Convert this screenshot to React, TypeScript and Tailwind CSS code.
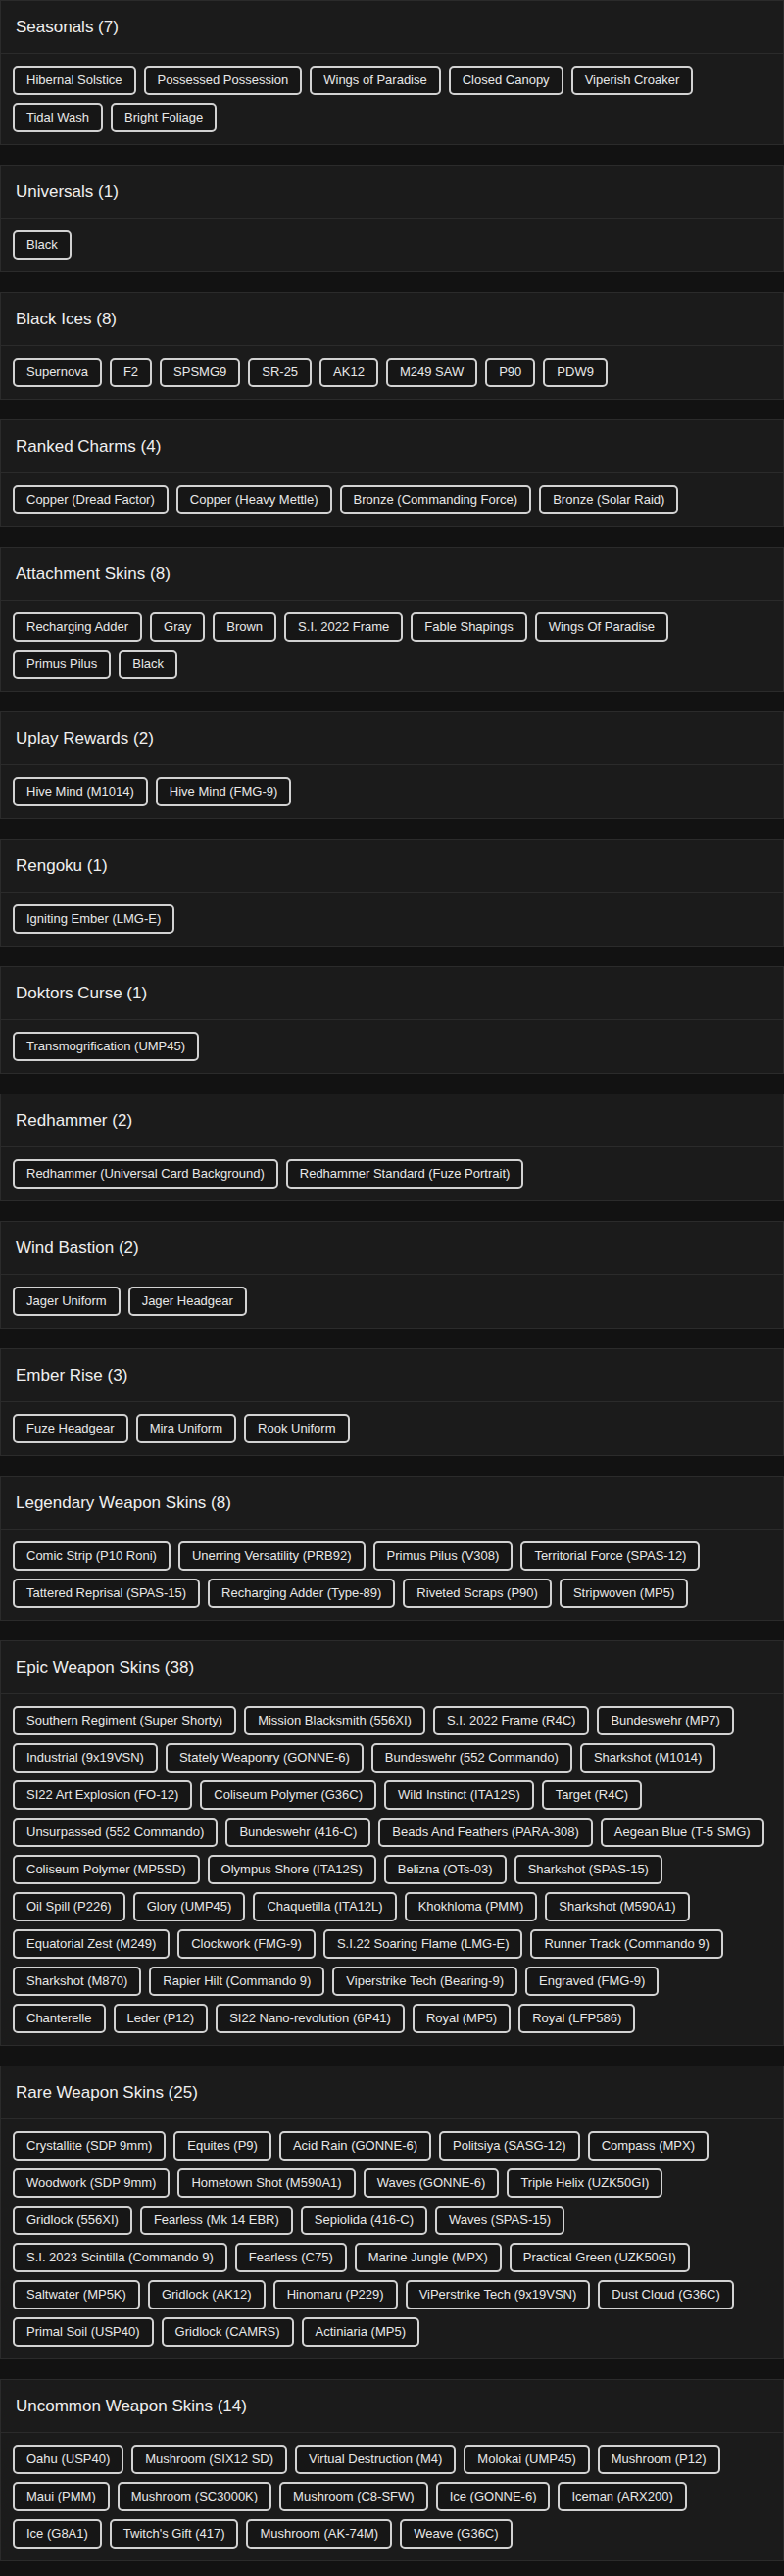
import { FC } from "react";

type Section = {
  title: string;
  rows: string[][];
};

// rows are kept as they wrap in the design
const SECTIONS: Section[] = [
  {
    title: "Seasonals",
    rows: [
      ["Hibernal Solstice", "Possessed Possession", "Wings of Paradise", "Closed Canopy", "Viperish Croaker"],
      ["Tidal Wash", "Bright Foliage"],
    ],
  },
  { title: "Universals", rows: [["Black"]] },
  {
    title: "Black Ices",
    rows: [["Supernova", "F2", "SPSMG9", "SR-25", "AK12", "M249 SAW", "P90", "PDW9"]],
  },
  {
    title: "Ranked Charms",
    rows: [
      ["Copper (Dread Factor)", "Copper (Heavy Mettle)", "Bronze (Commanding Force)", "Bronze (Solar Raid)"],
    ],
  },
  {
    title: "Attachment Skins",
    rows: [
      ["Recharging Adder", "Gray", "Brown", "S.I. 2022 Frame", "Fable Shapings", "Wings Of Paradise"],
      ["Primus Pilus", "Black"],
    ],
  },
  { title: "Uplay Rewards", rows: [["Hive Mind (M1014)", "Hive Mind (FMG-9)"]] },
  { title: "Rengoku", rows: [["Igniting Ember (LMG-E)"]] },
  { title: "Doktors Curse", rows: [["Transmogrification (UMP45)"]] },
  {
    title: "Redhammer",
    rows: [["Redhammer (Universal Card Background)", "Redhammer Standard (Fuze Portrait)"]],
  },
  { title: "Wind Bastion", rows: [["Jager Uniform", "Jager Headgear"]] },
  { title: "Ember Rise", rows: [["Fuze Headgear", "Mira Uniform", "Rook Uniform"]] },
  {
    title: "Legendary Weapon Skins",
    rows: [
      ["Comic Strip (P10 Roni)", "Unerring Versatility (PRB92)", "Primus Pilus (V308)", "Territorial Force (SPAS-12)"],
      ["Tattered Reprisal (SPAS-15)", "Recharging Adder (Type-89)", "Riveted Scraps (P90)", "Stripwoven (MP5)"],
    ],
  },
  {
    title: "Epic Weapon Skins",
    rows: [
      ["Southern Regiment (Super Shorty)", "Mission Blacksmith (556XI)", "S.I. 2022 Frame (R4C)", "Bundeswehr (MP7)"],
      ["Industrial (9x19VSN)", "Stately Weaponry (GONNE-6)", "Bundeswehr (552 Commando)", "Sharkshot (M1014)"],
      ["SI22 Art Explosion (FO-12)", "Coliseum Polymer (G36C)", "Wild Instinct (ITA12S)", "Target (R4C)"],
      ["Unsurpassed (552 Commando)", "Bundeswehr (416-C)", "Beads And Feathers (PARA-308)", "Aegean Blue (T-5 SMG)"],
      ["Coliseum Polymer (MP5SD)", "Olympus Shore (ITA12S)", "Belizna (OTs-03)", "Sharkshot (SPAS-15)"],
      ["Oil Spill (P226)", "Glory (UMP45)", "Chaquetilla (ITA12L)", "Khokhloma (PMM)", "Sharkshot (M590A1)"],
      ["Equatorial Zest (M249)", "Clockwork (FMG-9)", "S.I.22 Soaring Flame (LMG-E)", "Runner Track (Commando 9)"],
      ["Sharkshot (M870)", "Rapier Hilt (Commando 9)", "Viperstrike Tech (Bearing-9)", "Engraved (FMG-9)"],
      ["Chanterelle", "Leder (P12)", "SI22 Nano-revolution (6P41)", "Royal (MP5)", "Royal (LFP586)"],
    ],
  },
  {
    title: "Rare Weapon Skins",
    rows: [
      ["Crystallite (SDP 9mm)", "Equites (P9)", "Acid Rain (GONNE-6)", "Politsiya (SASG-12)", "Compass (MPX)"],
      ["Woodwork (SDP 9mm)", "Hometown Shot (M590A1)", "Waves (GONNE-6)", "Triple Helix (UZK50GI)"],
      ["Gridlock (556XI)", "Fearless (Mk 14 EBR)", "Sepiolida (416-C)", "Waves (SPAS-15)"],
      ["S.I. 2023 Scintilla (Commando 9)", "Fearless (C75)", "Marine Jungle (MPX)", "Practical Green (UZK50GI)"],
      ["Saltwater (MP5K)", "Gridlock (AK12)", "Hinomaru (P229)", "ViPerstrike Tech (9x19VSN)", "Dust Cloud (G36C)"],
      ["Primal Soil (USP40)", "Gridlock (CAMRS)", "Actiniaria (MP5)"],
    ],
  },
  {
    title: "Uncommon Weapon Skins",
    rows: [
      ["Oahu (USP40)", "Mushroom (SIX12 SD)", "Virtual Destruction (M4)", "Molokai (UMP45)", "Mushroom (P12)"],
      ["Maui (PMM)", "Mushroom (SC3000K)", "Mushroom (C8-SFW)", "Ice (GONNE-6)", "Iceman (ARX200)"],
      ["Ice (G8A1)", "Twitch's Gift (417)", "Mushroom (AK-74M)", "Weave (G36C)"],
    ],
  },
];

const Tag: FC<{ label: string }> = ({ label }) => (
  <span className="rounded-[5px] border-2 border-[#d2d2d2] bg-[#161616] px-3 py-1 text-[13px] leading-[18px] text-[#e8e8e8] whitespace-nowrap">
    {label}
  </span>
);

const SectionCard: FC<{ section: Section }> = ({ section }) => {
  const count = section.rows.reduce((n, row) => n + row.length, 0);
  return (
    <div className="border border-[#2b2b2b] bg-[#1b1b1b]">
      <div className="flex h-[54px] items-center border-b border-[#2b2b2b] px-[15px]">
        <h2 className="text-[17px] font-normal text-[#efefef]">
          {section.title} ({count})
        </h2>
      </div>
      <div className="flex flex-col gap-2 p-3">
        {section.rows.map((row, i) => (
          <div key={i} className="flex gap-2">
            {row.map((item, j) => (
              <Tag key={j} label={item} />
            ))}
          </div>
        ))}
      </div>
    </div>
  );
};

export default function App() {
  return (
    <div
      className="flex min-h-screen w-[800px] flex-col gap-5 bg-[#121212]"
      style={{ fontFamily: '"Liberation Sans", Arial, sans-serif' }}
    >
      {SECTIONS.map((section) => (
        <SectionCard key={section.title} section={section} />
      ))}
    </div>
  );
}
